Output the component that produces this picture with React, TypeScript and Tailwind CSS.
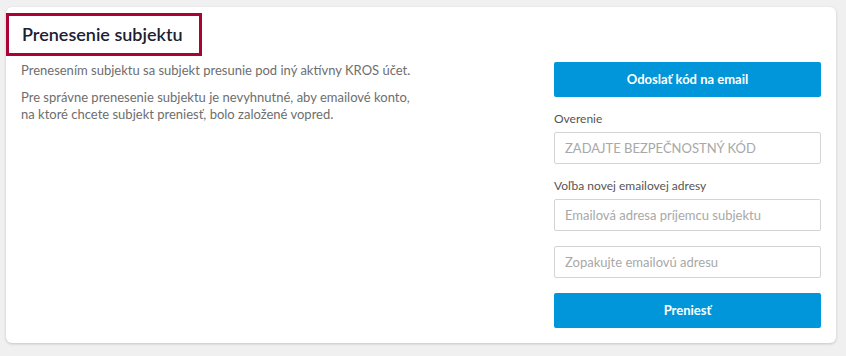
export default function App() {
  return (
    <div className="min-h-[356px] w-[846px] bg-[#f0f0f0] pl-[6px] pr-[10px] pt-[7px] font-['Lato','Open_Sans',sans-serif]">
      <div className="flex h-[336px] w-[830px] flex-col rounded-[6px] bg-white shadow-[0_1px_3px_rgba(0,0,0,0.18)]">
        <div className="mt-[6px] flex h-[43px] w-[196px] items-center border-[3px] border-[#aa0234] pl-[13px]">
          <h1 className="text-[18px] font-semibold text-[#1c2031]">Prenesenie subjektu</h1>
        </div>
        <div className="flex justify-between pl-[15px] pr-[15px]">
          <div className="pt-[6px] text-[13px] leading-[17px] text-[#6e6e6e]">
            <p>Prenesením subjektu sa subjekt presunie pod iný aktívny KROS účet.</p>
            <p className="mt-[10px] w-[400px]">
              Pre správne prenesenie subjektu je nevyhnutné, aby emailové konto, na ktoré chcete subjekt preniesť, bolo založené vopred.
            </p>
          </div>
          <div className="flex w-[267px] flex-col pt-[6px]">
            <button className="h-[35px] rounded-[2px] bg-[#0096d9] text-[13px] font-bold text-white">
              Odoslať kód na email
            </button>
            <label className="mt-[13px] text-[12px] leading-[18px] text-[#555]">Overenie</label>
            <input
              className="mt-[4px] h-[32px] rounded-[2px] border border-[#d4d4d4] px-[10px] text-[13px] placeholder:text-[#a8a8a8]"
              placeholder="ZADAJTE BEZPEČNOSTNÝ KÓD"
            />
            <label className="mt-[13px] text-[12px] leading-[18px] text-[#555]">Voľba novej emailovej adresy</label>
            <input
              className="mt-[4px] h-[32px] rounded-[2px] border border-[#d4d4d4] px-[10px] text-[13px] placeholder:text-[#a8a8a8]"
              placeholder="Emailová adresa príjemcu subjektu"
            />
            <input
              className="mt-[15px] h-[32px] rounded-[2px] border border-[#d4d4d4] px-[10px] text-[13px] placeholder:text-[#a8a8a8]"
              placeholder="Zopakujte emailovú adresu"
            />
            <button className="mt-[15px] h-[35px] rounded-[2px] bg-[#0096d9] text-[13px] font-bold text-white">
              Preniesť
            </button>
          </div>
        </div>
      </div>
    </div>
  );
}
